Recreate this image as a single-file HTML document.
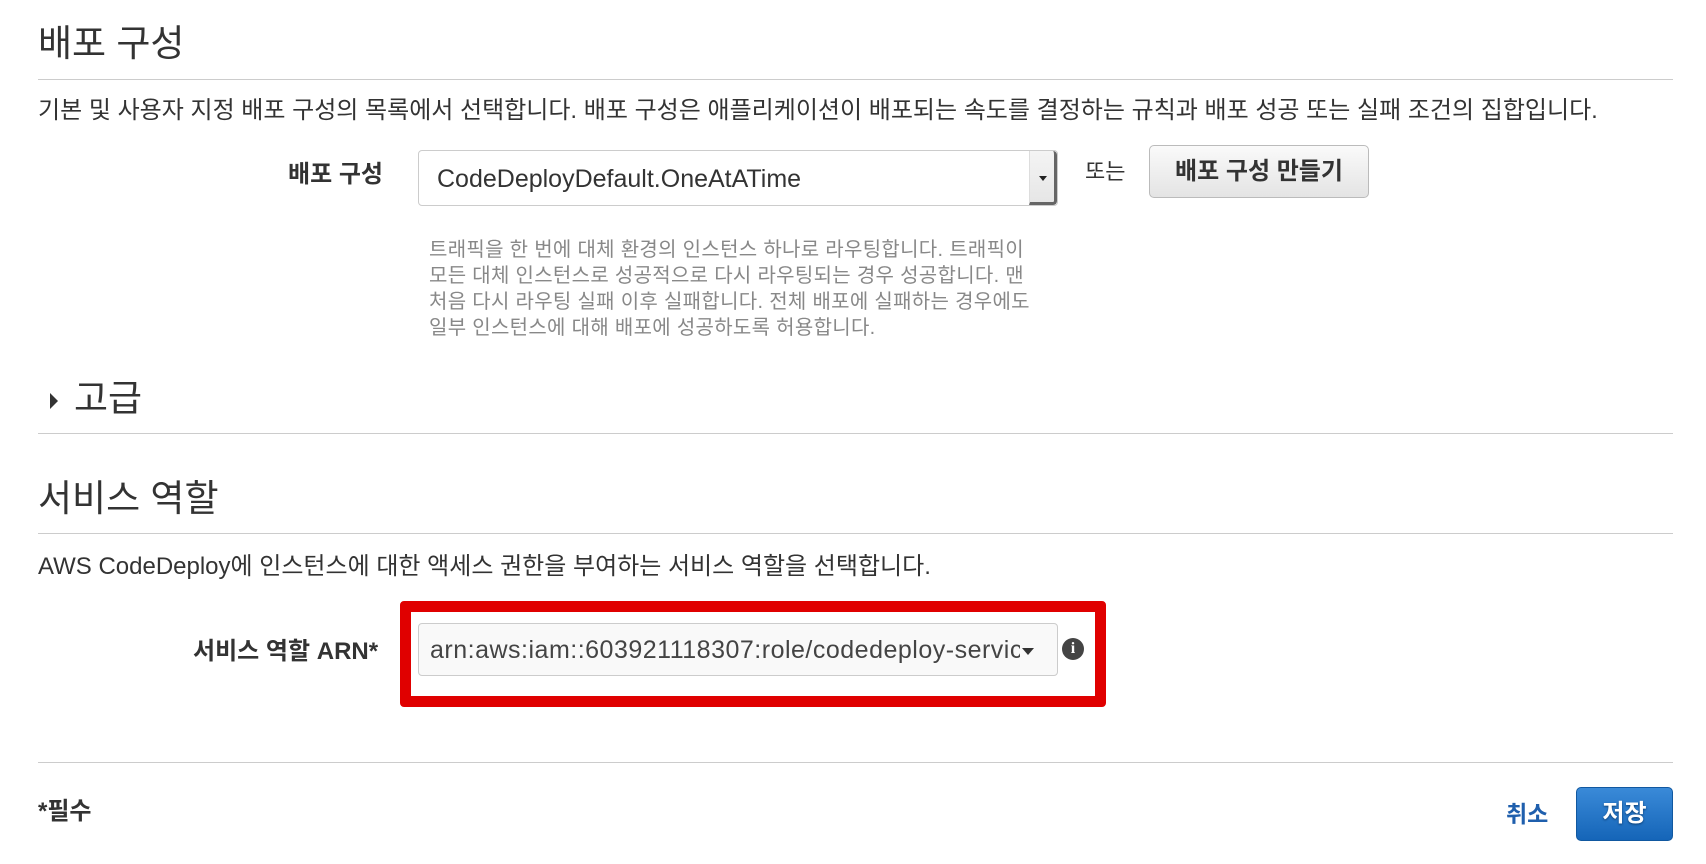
<!DOCTYPE html>
<html><head><meta charset="utf-8"><style>
*{box-sizing:border-box;margin:0;padding:0}
body{width:1706px;height:864px;background:#fff;position:relative;font-family:"Liberation Sans","Noto Sans CJK KR",sans-serif;color:#333;overflow:hidden}
.a{position:absolute;white-space:nowrap}
.h{font-size:37px;color:#333;line-height:1}
.hr{position:absolute;left:38px;width:1635px;height:1px;background:#ccc}
.d{font-size:24px;line-height:1}
.lbl{font-size:24px;font-weight:bold;line-height:1}
.sel{position:absolute;border:1px solid #ccc;border-radius:4px;background:#f9f9f9;font-size:25px;color:#333}
.help{font-size:20px;color:#888;line-height:26px;letter-spacing:0.3px}
</style></head><body>
<div class="a h" style="left:38px;top:25px">배포 구성</div>
<div class="hr" style="top:79px"></div>
<div class="a d" style="left:38px;top:99px">기본 및 사용자 지정 배포 구성의 목록에서 선택합니다. 배포 구성은 애플리케이션이 배포되는 속도를 결정하는 규칙과 배포 성공 또는 실패 조건의 집합입니다.</div>
<div class="a lbl" style="left:288px;top:163px">배포 구성</div>
<div class="sel" style="left:418px;top:150px;width:640px;height:56px;background:#fff">
 <div class="a" style="left:18px;top:14px">CodeDeployDefault.OneAtATime</div>
 <div style="position:absolute;right:0;top:0;width:28px;height:54px;background:linear-gradient(#f4f4f4,#e6e6e6);border-left:1px solid #ddd;border-right:3px solid #666;border-bottom:3px solid #666;border-radius:0 4px 4px 0"></div>
 <div style="position:absolute;right:10px;top:25px;border-left:4px solid transparent;border-right:4px solid transparent;border-top:5px solid #222"></div>
</div>
<div class="a d" style="left:1085px;top:161px;font-size:22px">또는</div>
<div class="a" style="left:1149px;top:145px;width:220px;height:53px;border:1px solid #bbb;border-radius:5px;background:linear-gradient(#fafafa,#e4e4e4);font-size:24px;font-weight:bold;text-align:center;line-height:51px;color:#333">배포 구성 만들기</div>
<div class="a help" style="left:429px;top:237px">트래픽을 한 번에 대체 환경의 인스턴스 하나로 라우팅합니다. 트래픽이<br>모든 대체 인스턴스로 성공적으로 다시 라우팅되는 경우 성공합니다. 맨<br>처음 다시 라우팅 실패 이후 실패합니다. 전체 배포에 실패하는 경우에도<br>일부 인스턴스에 대해 배포에 성공하도록 허용합니다.</div>
<div class="a" style="left:50px;top:393px;border-top:8px solid transparent;border-bottom:8px solid transparent;border-left:8px solid #333"></div>
<div class="a h" style="left:74px;top:380px">고급</div>
<div class="hr" style="top:433px"></div>
<div class="a h" style="left:38px;top:480px">서비스 역할</div>
<div class="hr" style="top:533px"></div>
<div class="a d" style="left:38px;top:555px">AWS CodeDeploy에 인스턴스에 대한 액세스 권한을 부여하는 서비스 역할을 선택합니다.</div>
<div class="a" style="left:400px;top:601px;width:706px;height:106px;border:11px solid #e00000;border-radius:4px"></div>
<div class="a lbl" style="left:193px;top:640px">서비스 역할 ARN*</div>
<div class="sel" style="left:418px;top:623px;width:640px;height:53px">
 <div class="a" style="left:11px;top:12px;width:590px;overflow:hidden;color:#444;letter-spacing:0.5px">arn:aws:iam::603921118307:role/codedeploy-service-role</div>
 <div style="position:absolute;left:603px;top:24px;border-left:6px solid transparent;border-right:6px solid transparent;border-top:7px solid #333"></div>
</div>
<div class="a" style="left:1062px;top:638px;width:22px;height:22px;border-radius:50%;background:#444;color:#fff;font:bold 16px 'Liberation Serif',serif;text-align:center;line-height:22px">i</div>
<div class="hr" style="top:762px"></div>
<div class="a" style="left:38px;top:791px;font-size:24px;font-weight:bold">*필수</div>
<div class="a" style="left:1506px;top:795px;font-size:23px;font-weight:bold;color:#1f5fad">취소</div>
<div class="a" style="left:1576px;top:787px;width:97px;height:54px;border-radius:5px;background:linear-gradient(#3a8ad8,#1565b8);border:1px solid #1158a0;color:#fff;font-size:24px;font-weight:bold;text-align:center;line-height:52px;text-shadow:0 1px 2px #0a3c70">저장</div>
</body></html>
